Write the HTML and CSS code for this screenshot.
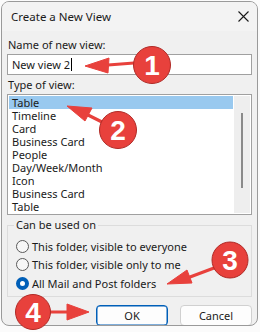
FILE: index.html
```html
<!DOCTYPE html>
<html lang="en">
  <head>
    <meta charset="UTF-8" />
    <title>Create a New View</title>
    <link rel="stylesheet" href="styles.css">
  </head>
  <body>
    <div class="dialog">
      <div class="titlebar">
        <span class="title">Create a New View</span>
        <svg class="close" width="11" height="11" viewBox="0 0 11 11">
          <path d="M0.5 0.5 L10.5 10.5 M10.5 0.5 L0.5 10.5" stroke="#1a1a1a" stroke-width="1.1" fill="none" />
        </svg>
      </div>

      <div class="content">
        <div class="field-label">Name of new view:</div>
        <div class="textbox">New view 2<span class="caret"></span></div>

        <div class="field-label type-label">Type of view:</div>
        <div class="listbox">
          <ul class="items">
            <li class="selected">Table</li>
            <li>Timeline</li>
            <li>Card</li>
            <li>Business Card</li>
            <li>People</li>
            <li>Day/Week/Month</li>
            <li>Icon</li>
            <li>Business Card</li>
            <li>Table</li>
          </ul>
          <div class="scrollbar"><div class="thumb"></div></div>
        </div>

        <fieldset class="group">
          <legend>Can be used on</legend>
          <div class="radio"><span class="circle"></span>This folder, visible to everyone</div>
          <div class="radio"><span class="circle"></span>This folder, visible only to me</div>
          <div class="radio"><span class="circle checked"></span>All Mail and Post folders</div>
        </fieldset>

        <div class="actions">
          <button class="btn default">OK</button>
          <button class="btn">Cancel</button>
        </div>
      </div>
    </div>

    <svg class="annotations" width="260" height="332" viewBox="0 0 260 332">
      <g fill="#e8413c" stroke="#e8413c">
        <!-- 1 -->
        <path d="M134 63 L108 65" stroke-width="3.2" stroke-linecap="round" />
        <polygon points="85,66 109,58 108,73" stroke-width="1" stroke-linejoin="round" />
        <!-- 2 -->
        <path d="M102 122 L88 115" stroke-width="3.2" stroke-linecap="round" />
        <polygon points="67,106 92,108 85,121" stroke-width="1" stroke-linejoin="round" />
        <!-- 3 -->
        <path d="M214 268 L190 277" stroke-width="3.2" stroke-linecap="round" />
        <polygon points="167,284 187,270 192,283" stroke-width="1" stroke-linejoin="round" />
        <!-- 4 -->
        <path d="M50 312 L68 312" stroke-width="3.2" stroke-linecap="round" />
        <polygon points="89,312 67,304 67,320" stroke-width="1" stroke-linejoin="round" />
      </g>
      <g class="badge">
        <circle cx="152" cy="65" r="18.5" />
        <text x="152" y="75">1</text>
        <circle cx="118" cy="130" r="18.5" />
        <text x="118" y="140">2</text>
        <circle cx="230" cy="260" r="18" />
        <text x="230" y="270">3</text>
        <circle cx="33" cy="312" r="17.5" />
        <text x="33" y="322">4</text>
      </g>
    </svg>
  </body>
</html>
```

FILE: styles.css
```css
* {
  box-sizing: border-box;
}

body {
  margin: 0;
  width: 260px;
  height: 332px;
  overflow: hidden;
  background: #fbfbfb;
  font-family: "Noto Sans", "Open Sans", sans-serif;
  font-size: 11px;
  color: #1a1a1a;
  position: relative;
}

.dialog {
  margin: 1px 0 0 1px;
  width: 257px;
  height: 325px;
  border: 1px solid #9a9a9a;
  border-radius: 8px;
  background: #f0f0f0;
  overflow: hidden;
}

.titlebar {
  height: 29px;
  display: flex;
  align-items: center;
  justify-content: space-between;
  padding: 0 8px 0 9px;
  background: #f3f3f3;
}

.title {
  font-size: 11.5px;
  color: #1a1a1a;
}

.close {
  display: block;
}

.content {
  padding: 6px 5px 0 5px;
}

.field-label {
  height: 16px;
  line-height: 16px;
  padding-left: 1px;
}

.textbox {
  margin-top: 1px;
  height: 21px;
  border: 1px solid #a0a0a0;
  background: #fff;
  line-height: 19px;
  padding-left: 4px;
  display: flex;
  align-items: center;
}

.caret {
  display: inline-block;
  width: 1px;
  height: 13px;
  background: #000;
  margin-left: 1px;
}

.type-label {
  margin-top: 2px;
}

.listbox {
  margin-top: 1px;
  height: 121px;
  border: 1px solid #a0a0a0;
  background: #fff;
  padding: 1px;
  display: flex;
}

.items {
  flex: 1;
  list-style: none;
  margin: 0;
  padding: 0;
}

.items li {
  height: 13px;
  line-height: 13px;
  padding-left: 3px;
}

.items li.selected {
  background: #99c9ef;
}

.scrollbar {
  width: 16px;
  margin-left: 1px;
  background: #eeeeee;
}

.thumb {
  margin: 17px 0 0 7px;
  width: 2px;
  height: 75px;
  background: #8a8a8a;
}

.group {
  margin: 2px 0 0 0;
  padding: 4px 8px 3px 8px;
  border: 1px solid #dcdcdc;
  min-width: 0;
}

.group legend {
  margin-left: -2px;
  padding: 0 2px;
  line-height: 16px;
}

.radio {
  height: 18.5px;
  display: flex;
  align-items: center;
  gap: 3px;
}

.circle {
  width: 13px;
  height: 13px;
  border: 1px solid #5a5a5a;
  border-radius: 50%;
  background: #f7f7f7;
}

.circle.checked {
  border: 4px solid #005fb8;
  background: #fff;
}

.actions {
  margin-top: 8px;
  display: flex;
  justify-content: flex-end;
  gap: 12px;
}

.btn {
  width: 72px;
  height: 21px;
  font-family: inherit;
  font-size: 11px;
  color: #1a1a1a;
  background: #fdfdfd;
  border: 1px solid #d0d0d0;
  border-radius: 4px;
  padding: 0;
}

.btn.default {
  border-color: #005fb8;
  box-shadow: inset 0 0 0 0.5px #005fb8;
}

.annotations {
  position: absolute;
  top: 0;
  left: 0;
}

.badge circle {
  fill: #e8413c;
  stroke: #b02a26;
  stroke-width: 1;
}

.badge text {
  fill: #fff;
  font-family: "Liberation Sans", Arial, sans-serif;
  font-weight: bold;
  font-size: 28px;
  text-anchor: middle;
}
```
